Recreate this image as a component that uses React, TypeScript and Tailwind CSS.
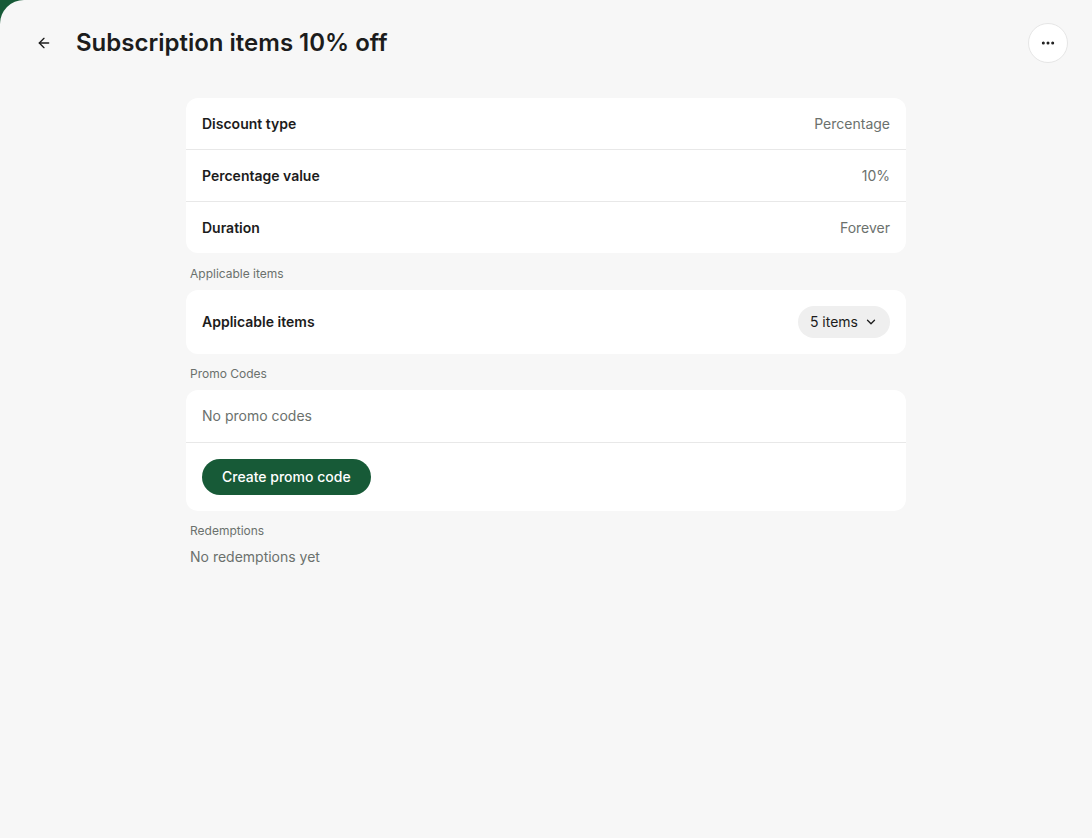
import { ArrowLeft, ChevronDown, Ellipsis } from 'lucide-react';

const details = [
  { label: 'Discount type', value: 'Percentage' },
  { label: 'Percentage value', value: '10%' },
  { label: 'Duration', value: 'Forever' },
];

const SectionLabel = ({ children, top = 'pt-3' }: { children: string; top?: string }) => (
  <div className={`px-1 ${top} pb-2 text-xs leading-4 text-[#6b716d]`}>{children}</div>
);

export default function App() {
  return (
    <div className="h-screen w-full bg-[#175a37]" style={{ fontFamily: 'Inter, "Noto Sans", sans-serif' }}>
      <div className="flex h-full flex-col rounded-tl-3xl bg-[#f7f7f7] text-[#1c1c1c]">
        <header className="flex items-center pl-7 pr-6 pt-[23px]">
          <button className="flex h-8 w-8 items-center justify-center rounded-full text-[#1c1c1c]">
            <ArrowLeft size={16} strokeWidth={2} />
          </button>
          <h1 className="ml-4 text-2xl font-semibold">Subscription items 10% off</h1>
          <button className="ml-auto flex h-10 w-10 items-center justify-center rounded-full border border-[#e6e6e6] bg-white">
            <Ellipsis size={16} strokeWidth={2.5} />
          </button>
        </header>

        <main className="mx-auto mt-[35px] w-[720px] text-sm">
          <div className="rounded-xl bg-white">
            {details.map((row, i) => (
              <div
                key={row.label}
                className={`flex h-[51px] items-center justify-between px-4 ${i > 0 ? 'h-[52px] border-t border-[#e8e8e8]' : ''}`}
              >
                <span className="font-semibold">{row.label}</span>
                <span className="text-[#6b716d]">{row.value}</span>
              </div>
            ))}
          </div>

          <SectionLabel top="pt-[13px]">Applicable items</SectionLabel>
          <div className="flex h-16 items-center justify-between rounded-xl bg-white px-4">
            <span className="font-semibold">Applicable items</span>
            <button className="flex h-8 items-center gap-1.5 rounded-full bg-[#efefef] pl-3 pr-3 text-[#1c1c1c]">
              5 items
              <ChevronDown size={14} strokeWidth={2.25} />
            </button>
          </div>

          <SectionLabel>Promo Codes</SectionLabel>
          <div className="rounded-xl bg-white">
            <div className="flex h-[52px] items-center px-4 text-[#6b716d]">No promo codes</div>
            <div className="border-t border-[#e8e8e8] px-4 pt-4 pb-4">
              <button className="h-9 rounded-full bg-[#175a37] px-5 font-medium text-white">
                Create promo code
              </button>
            </div>
          </div>

          <SectionLabel>Redemptions</SectionLabel>
          <div className="px-1 text-[#6b716d]">No redemptions yet</div>
        </main>
      </div>
    </div>
  );
}
